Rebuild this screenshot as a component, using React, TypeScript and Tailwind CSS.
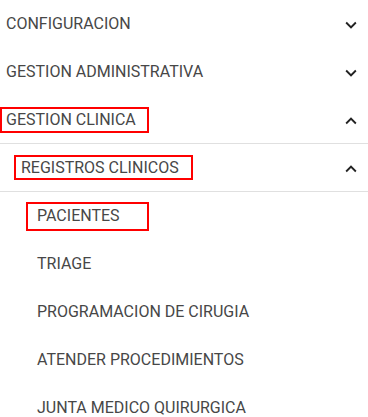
type Level = 0 | 1 | 2

type MenuRowProps = Readonly<{
  label: string
  level: Level
  open?: boolean
  box?: string
  divider?: boolean
}>

const indent: Record<Level, string> = {
  0: 'pl-[6px]',
  1: 'pl-[21px]',
  2: 'pl-[37px]',
}

// material icons expand_more / expand_less
function Chevron({ up }: { up: boolean }) {
  return (
    <svg viewBox="0 0 24 24" className="h-[22px] w-[22px] translate-y-[1px] fill-[#222]" aria-hidden>
      {up ? (
        <path d="M12 8l-6 6 1.41 1.41L12 10.83l4.59 4.58L18 14z" />
      ) : (
        <path d="M16.59 8.59L12 13.17 7.41 8.59 6 10l6 6 6-6z" />
      )}
    </svg>
  )
}

function MenuRow({ label, level, open, box, divider }: MenuRowProps) {
  return (
    <div
      className={`flex h-[48px] items-center justify-between pr-[6px] ${indent[level]} ${
        divider ? 'border-b border-[#e0e0e0]' : ''
      }`}
    >
      <span className="relative text-[16px] leading-none text-[#474747]">
        {label}
        {box && <span className={`pointer-events-none absolute border-[2.5px] border-[#ff0000] ${box}`} />}
      </span>
      {open !== undefined && <Chevron up={open} />}
    </div>
  )
}

export default function App() {
  return (
    <div className="h-[417px] w-[368px] overflow-hidden bg-white font-['Roboto',sans-serif]">
      <MenuRow label="CONFIGURACION" level={0} open={false} />
      <MenuRow label="GESTION ADMINISTRATIVA" level={0} open={false} />
      <MenuRow
        label="GESTION CLINICA"
        level={0}
        open
        divider
        box="-top-[5px] -bottom-[5px] -left-[6px] -right-[13px]"
      />
      <MenuRow
        label="REGISTROS CLINICOS"
        level={1}
        open
        divider
        box="-top-[5px] -bottom-[4px] -left-[7px] -right-[14px]"
      />
      <MenuRow label="PACIENTES" level={2} box="-top-[6px] -bottom-[7px] -left-[11px] -right-[29px]" />
      <MenuRow label="TRIAGE" level={2} />
      <MenuRow label="PROGRAMACION DE CIRUGIA" level={2} />
      <MenuRow label="ATENDER PROCEDIMIENTOS" level={2} />
      <MenuRow label="JUNTA MEDICO QUIRURGICA" level={2} />
    </div>
  )
}
